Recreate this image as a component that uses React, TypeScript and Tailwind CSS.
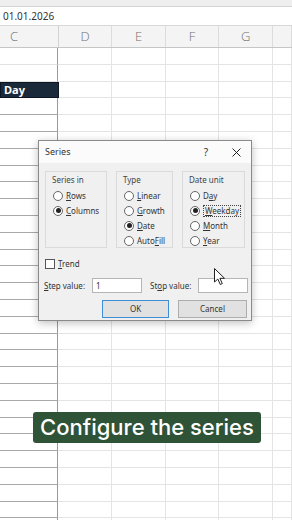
import React from "react";

const cols = [
  { l: "C", w: 61 },
  { l: "D", w: 56 },
  { l: "E", w: 56 },
  { l: "F", w: 56 },
  { l: "G", w: 56 },
  { l: "", w: 20 },
];

function Radio({ checked }: { checked?: boolean }) {
  return (
    <span className="w-[10px] h-[10px] rounded-full border border-[#666] bg-white flex items-center justify-center shrink-0">
      {checked && <span className="w-[5px] h-[5px] rounded-full bg-[#222]" />}
    </span>
  );
}

function Opt({ pre, u, post, checked, focus }: { pre: string; u: string; post: string; checked?: boolean; focus?: boolean }) {
  return (
    <div className="h-[15px] flex items-center gap-[3px]">
      <Radio checked={checked} />
      <span className={focus ? "border border-dotted border-[#444] px-[1px] leading-[10px]" : "leading-[10px]"}>
        {pre}
        <span className="underline">{u}</span>
        {post}
      </span>
    </div>
  );
}

function Group({ title, w, children }: { title: string; w: number; children: React.ReactNode }) {
  return (
    <div className="h-[77px] border border-[#dadada] pl-[6px] pt-[2px] flex flex-col" style={{ width: w }}>
      <div className="h-[12px] leading-[12px] mb-[2px] text-[#444]">{title}</div>
      <div className="flex flex-col pl-[1px]">{children}</div>
    </div>
  );
}

export default function App() {
  const rows = Array.from({ length: 29 });
  return (
    <div className="relative w-[292px] h-[520px] overflow-hidden bg-white" style={{ fontFamily: '"Noto Sans", "Open Sans", sans-serif' }}>
      <div className="h-[7px] bg-[#efefef] border-b border-[#d4d4d4]" />
      <div className="h-[19px] bg-white border-b border-[#d8d8d8] flex items-center pl-[3px] text-[10px] text-[#333]">01.01.2026</div>
      <div className="h-[22px] bg-[#f4f4f4] border-b border-[#c6c6c6] flex">
        {cols.map((c, i) => (
          <div
            key={i}
            className={`h-full flex items-center text-[13px] text-[#707070] font-light ${i === 0 ? "pl-[10px] border-r border-[#d2d2d2]" : "justify-center border-r border-[#dcdcdc]"}`}
            style={{ width: c.w, fontFamily: '"Open Sans", sans-serif' }}
          >
            {c.l}
          </div>
        ))}
      </div>
      <div className="flex flex-col">
        {rows.map((_, r) => (
          <div key={r} className="flex h-[16.8px] shrink-0">
            {cols.map((c, i) => {
              if (i === 0) {
                if (r === 2) {
                  return (
                    <div key={i} className="h-full bg-[#1b2a3b] border border-[#0d1620] text-white font-bold text-[11px] flex items-center pl-[3px]" style={{ width: c.w }}>
                      Day
                    </div>
                  );
                }
                return (
                  <div
                    key={i}
                    className={`h-full border-r border-[#9a9a9a] ${r >= 2 ? "border-b border-b-[#a8a8a8]" : "border-b border-b-[#e2e2e2]"}`}
                    style={{ width: c.w }}
                  />
                );
              }
              return <div key={i} className="h-full border-r border-b border-[#e4e4e4]" style={{ width: c.w }} />;
            })}
          </div>
        ))}
      </div>

      {/* Dialog */}
      <div className="absolute left-[38px] top-[140px] w-[214px] h-[181px] bg-[#f0f0f0] border border-[#8a8a8a] shadow-[0_2px_8px_rgba(0,0,0,0.25)] flex flex-col text-[8px] text-[#333]">
        <div className="h-[22px] bg-[#fbfbfb] flex items-center pl-[6px] pr-[10px] text-[9px]">
          <span className="flex-1">Series</span>
          <span className="text-[10px] mr-[24px]">?</span>
          <svg width="9" height="9" viewBox="0 0 9 9">
            <path d="M0.5 0.5 L8.5 8.5 M8.5 0.5 L0.5 8.5" stroke="#222" strokeWidth="1" />
          </svg>
        </div>
        <div className="flex pl-[6px] mt-[8px] gap-[9px]">
          <Group title="Series in" w={62}>
            <Opt pre="" u="R" post="ows" />
            <Opt pre="" u="C" post="olumns" checked />
          </Group>
          <Group title="Type" w={57}>
            <Opt pre="" u="L" post="inear" />
            <Opt pre="" u="G" post="rowth" />
            <Opt pre="" u="D" post="ate" checked />
            <Opt pre="Auto" u="F" post="ill" />
          </Group>
          <Group title="Date unit" w={63}>
            <Opt pre="D" u="a" post="y" />
            <Opt pre="" u="W" post="eekday" checked focus />
            <Opt pre="" u="M" post="onth" />
            <Opt pre="" u="Y" post="ear" />
          </Group>
        </div>
        <div className="flex items-center gap-[3px] pl-[6px] mt-[10px] h-[12px]">
          <span className="w-[10px] h-[10px] border border-[#555] bg-white" />
          <span>
            <span className="underline">T</span>rend
          </span>
        </div>
        <div className="flex items-center pl-[5px] mt-[8px] h-[15px]">
          <span className="w-[48px]">
            <span className="underline">S</span>tep value:
          </span>
          <div className="w-[50px] h-[15px] bg-white border border-[#b5b5b5] flex items-center pl-[3px] text-[8px]">1</div>
          <span className="w-[56px] pl-[8px]">
            St<span className="underline">o</span>p value:
          </span>
          <div className="w-[50px] h-[15px] bg-white border border-[#b5b5b5]" />
        </div>
        <div className="flex pl-[63px] mt-[7px] gap-[9px]">
          <div className="w-[67px] h-[18px] bg-[#e1e1e1] border border-[#3d8ed3] flex items-center justify-center">OK</div>
          <div className="w-[69px] h-[18px] bg-[#e1e1e1] border border-[#adadad] flex items-center justify-center">Cancel</div>
        </div>
      </div>

      {/* Cursor */}
      <svg className="absolute left-[214px] top-[268px]" width="12" height="18" viewBox="0 0 12 18">
        <path d="M0.5 0.5 L0.5 14 L3.8 11 L6.3 16.5 L8.3 15.6 L5.9 10.3 L10.5 10.3 Z" fill="white" stroke="#222" strokeWidth="1" strokeLinejoin="round" />
      </svg>

      {/* Caption */}
      <div className="absolute left-[33px] top-[412px] w-[228px] h-[31px] rounded-[3px] bg-[#2f5337] flex items-center justify-center text-white text-[22px] font-medium" style={{ fontFamily: 'Inter, sans-serif' }}>
        Configure the series
      </div>
    </div>
  );
}
